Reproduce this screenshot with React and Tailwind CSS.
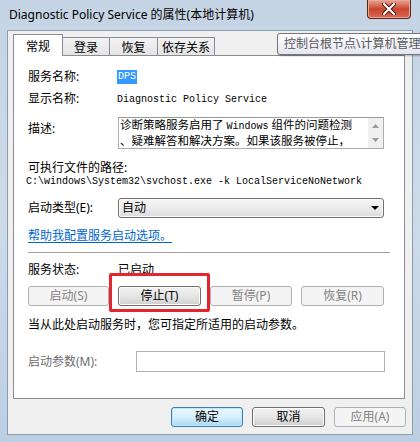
import React from 'react';

const cjk = "font-['Noto_Sans','Noto_Sans_CJK_SC',sans-serif]";
const mono = "font-['Liberation_Mono','Noto_Sans_CJK_SC',monospace]";

function WinButton({ children, className = '', disabled, primary }) {
  const base = 'flex items-center justify-center h-[20px] rounded-[3px] border text-[12px] leading-none';
  const look = disabled
    ? 'border-[#adb2b5] bg-[#f4f4f4] text-[#838383]'
    : primary
    ? 'border-[#3c7fb1] bg-gradient-to-b from-[#eaf6fd] via-[#d9f0fc] to-[#a7d9f5] text-black shadow-[inset_0_0_0_1px_#bee6fd]'
    : 'border-[#707070] bg-gradient-to-b from-[#f2f2f2] via-[#e6e6e6] to-[#cfcfcf] text-black shadow-[inset_0_0_0_1px_#fcfcfc]';
  return <div className={`${base} ${look} ${cjk} ${className}`}>{children}</div>;
}

function Tab({ children, active, className = '' }) {
  if (active) {
    return (
      <div className={`relative z-10 flex h-[22px] w-[50px] items-start justify-center border border-b-0 border-[#898c95] bg-white pt-[3px] text-[12px] ${className}`}>
        {children}
      </div>
    );
  }
  return (
    <div className={`flex h-[19px] items-start justify-center border border-b-0 border-[#898c95] bg-gradient-to-b from-[#f3f3f3] to-[#e3e3e3] pt-[1px] text-[12px] ${className}`}>
      {children}
    </div>
  );
}

export default function App() {
  return (
    <div className={`relative flex h-[442px] w-[420px] flex-col overflow-hidden bg-gradient-to-b from-[#c5d4e4] via-[#cddbe9] to-[#bccfe3] ${cjk}`}>
      {/* title bar */}
      <div className="flex h-[30px] items-start justify-between">
        <div className="pl-[9px] pt-[6px] text-[12px] leading-[18px] text-black">
          Diagnostic Policy Service 的属性(本地计算机)
        </div>
        <div className="mr-[9px] flex h-[19px] w-[44px] items-center justify-center rounded-b-[4px] border border-t-0 border-[#5e2318] bg-gradient-to-b from-[#e7a597] via-[#c9452c] to-[#d86a52] shadow-[inset_0_0_0_1px_#eba898]">
          <svg width="14" height="12" viewBox="0 0 14 12">
            <path d="M2 1 L12 11 M12 1 L2 11" stroke="#4a1208" strokeWidth="4" strokeLinecap="round" />
            <path d="M2 1 L12 11 M12 1 L2 11" stroke="#ffffff" strokeWidth="2.2" strokeLinecap="round" />
          </svg>
        </div>
      </div>

      {/* client area */}
      <div className="mx-[7px] flex h-[405px] flex-col border border-[#8b9bb0] bg-[#f0f0f0]">
        {/* tabs */}
        <div className="flex h-[25px] items-end pl-[5px] -mb-[1px]">
          <Tab active>常规</Tab>
          <Tab className="-ml-[1px] w-[48px]">登录</Tab>
          <Tab className="-ml-[1px] w-[49px]">恢复</Tab>
          <Tab className="-ml-[1px] w-[58px]">依存关系</Tab>
        </div>

        {/* panel */}
        <div className="ml-[5px] mr-[7px] flex h-[344px] flex-col border border-[#898c95] bg-white pl-[14px] text-[12px] text-black">
          <div className="mt-[13px] flex h-[16px] items-center">
            <div className="w-[89px]">服务名称:</div>
            <span className={`bg-[#3399ff] px-[1px] leading-[14px] text-white ${mono} text-[10px]`}>DPS</span>
          </div>
          <div className="mt-[6px] flex h-[16px] items-center">
            <div className="w-[89px]">显示名称:</div>
            <span className={`${mono} text-[10px]`}>Diagnostic Policy Service</span>
          </div>

          <div className="mt-[10px] flex items-start">
            <div className="mt-[4px] h-[16px] w-[90px] leading-[16px]">描述:</div>
            <div className="flex h-[32px] w-[266px] border border-[#abadb3] border-t-[#9a9a9a]">
              <div className="flex flex-1 flex-col pl-[1px] text-[11.5px] leading-[14px]">
                <div className="whitespace-nowrap">诊断策略服务启用了 <span className={`${mono} text-[10px]`}>Windows</span> 组件的问题检测</div>
                <div className="whitespace-nowrap">、疑难解答和解决方案。如果该服务被停止，</div>
              </div>
              <div className="flex w-[15px] flex-col items-center justify-between bg-[#f0f0f0] py-[6px]">
                <svg width="7" height="4" viewBox="0 0 7 4"><path d="M0 4 L3.5 0 L7 4 Z" fill="#9a9a9a" /></svg>
                <svg width="7" height="4" viewBox="0 0 7 4"><path d="M0 0 L3.5 4 L7 0 Z" fill="#9a9a9a" /></svg>
              </div>
            </div>
          </div>

          <div className="mt-[11px] h-[15px] leading-[15px]">可执行文件的路径:</div>
          <div className={`h-[14px] -ml-[2px] leading-[14px] ${mono} text-[10px]`}>
            C:\windows\System32\svchost.exe -k LocalServiceNoNetwork
          </div>

          <div className="mt-[9px] flex items-center">
            <div className="w-[90px]">启动类型(E):</div>
            <div className="flex h-[20px] w-[266px] items-center justify-between rounded-[3px] border border-[#707070] bg-gradient-to-b from-[#f6f6f6] via-[#ececec] to-[#dcdcdc] pl-[3px] pr-[4px] shadow-[inset_0_0_0_1px_#fcfcfc]">
              <span>自动</span>
              <svg width="8" height="4" viewBox="0 0 8 4"><path d="M0 0 L8 0 L4 4 Z" fill="#000" /></svg>
            </div>
          </div>

          <div className="mt-[10px] h-[16px] leading-[16px]">
            <span className="text-[#0066cc] underline underline-offset-2">帮助我配置服务启动选项。</span>
          </div>

          <div className="mt-[8px] mr-[14px] h-[2px] border-t border-[#a0a0a0] bg-white"></div>

          <div className="mt-[8px] flex h-[16px] items-center">
            <div className="w-[90px]">服务状态:</div>
            <div>已启动</div>
          </div>

          <div className="mt-[8px] flex">
            <WinButton disabled className="w-[81px]">启动(S)</WinButton>
            <div className="relative ml-[9px]">
              <WinButton className="w-[83px]">停止(T)</WinButton>
              <div className="absolute -left-[9px] -top-[13px] h-[39px] w-[101px] rounded-[2px] border-[3px] border-[#e3262d]"></div>
            </div>
            <WinButton disabled className="ml-[9px] w-[82px]">暂停(P)</WinButton>
            <WinButton disabled className="ml-[9px] w-[83px]">恢复(R)</WinButton>
          </div>

          <div className="mt-[11px] h-[16px] leading-[16px]">当从此处启动服务时，您可指定所适用的启动参数。</div>

          <div className="mt-[18px] flex items-center">
            <div className="w-[108px] text-[#6d6d6d]">启动参数(M):</div>
            <div className="h-[21px] w-[249px] border border-[#adb2b5] bg-white"></div>
          </div>
        </div>

        {/* dialog buttons */}
        <div className="mt-[8px] flex justify-end gap-[9px] pr-[6px]">
          <WinButton primary className="w-[72px]">确定</WinButton>
          <WinButton className="w-[73px]">取消</WinButton>
          <WinButton disabled className="w-[72px]">应用(A)</WinButton>
        </div>
      </div>

      {/* tooltip */}
      <div className="absolute left-[277px] top-[33px] flex h-[22px] items-center whitespace-nowrap rounded-[3px] border border-[#767676] bg-gradient-to-b from-white to-[#e4e5f0] pl-[6px] pr-[8px] text-[12px] text-[#575757] shadow-[1px_1px_2px_rgba(0,0,0,0.25)]">
        控制台根节点\计算机管理
      </div>
    </div>
  );
}
